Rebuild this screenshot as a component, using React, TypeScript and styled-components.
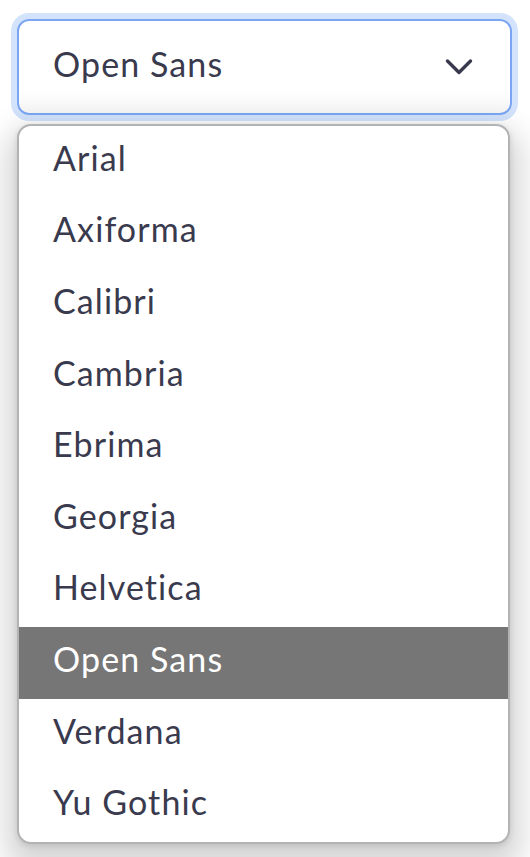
import React from "react";
import styled, { createGlobalStyle } from "styled-components";

const Global = createGlobalStyle`
  html, body { margin: 0; padding: 0; background: #ffffff; }
  body { font-family: Lato, "Open Sans", sans-serif; }
`;

const Page = styled.div`
  width: 530px;
  height: 857px;
  overflow: hidden;
  box-sizing: border-box;
  padding: 19px 18px 0 17px;
  display: flex;
  flex-direction: column;
  gap: 9px;
`;

const Trigger = styled.button`
  box-sizing: border-box;
  width: 495px;
  height: 96px;
  border: 2px solid #7aa6f3;
  border-radius: 12px;
  background: linear-gradient(#ffffff 75%, #f5f5f6);
  box-shadow: 0 0 0 6px #d3e3fc;
  display: flex;
  align-items: center;
  justify-content: space-between;
  padding: 0 37px 7px 34px;
  font-family: Lato, sans-serif;
  font-size: 34px;
  letter-spacing: 1.1px;
  color: #3a3a4e;
  cursor: pointer;
`;

const Chevron = styled.svg`
  margin-top: 6px;
`;

const Listbox = styled.ul`
  box-sizing: border-box;
  width: 493px;
  margin: 0;
  padding: 0;
  list-style: none;
  border: 2.5px solid #b3b3b6;
  border-radius: 14px;
  background: #ffffff;
  overflow: hidden;
  box-shadow: 0 16px 30px 12px rgba(0, 0, 0, 0.16), 0 2px 6px rgba(0, 0, 0, 0.12);
`;

const Option = styled.li<{ $active?: boolean }>`
  box-sizing: border-box;
  height: 71.6px;
  display: flex;
  align-items: center;
  padding: 0 0 9px 34px;
  font-size: 34px;
  letter-spacing: 1.1px;
  color: ${(p) => (p.$active ? "#ffffff" : "#3a3a4e")};
  background: ${(p) => (p.$active ? "#767676" : "transparent")};
`;

const fonts = [
  "Arial",
  "Axiforma",
  "Calibri",
  "Cambria",
  "Ebrima",
  "Georgia",
  "Helvetica",
  "Open Sans",
  "Verdana",
  "Yu Gothic",
];

export default function App() {
  const selected = "Open Sans";
  return (
    <>
      <Global />
      <Page>
        <Trigger>
          <span>{selected}</span>
          <Chevron width="28" height="18" viewBox="0 0 28 18" fill="none">
            <path
              d="M2.5 3 L14 14.5 L25.5 3"
              stroke="#3a3a4e"
              strokeWidth="3.4"
              strokeLinecap="round"
              strokeLinejoin="round"
            />
          </Chevron>
        </Trigger>
        <Listbox role="listbox">
          {fonts.map((f) => (
            <Option key={f} role="option" $active={f === selected}>
              {f}
            </Option>
          ))}
        </Listbox>
      </Page>
    </>
  );
}
